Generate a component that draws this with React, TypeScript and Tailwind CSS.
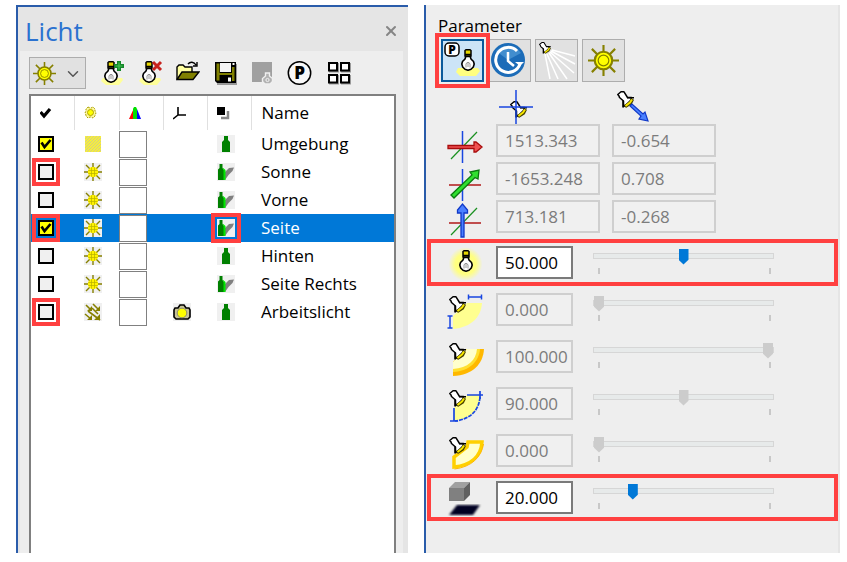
import React, { useState } from "react";
import { X, ChevronDown } from "lucide-react";

/* ---------- shared icon parts ---------- */

const Bulb = () => (
  <g>
    <path
      d="M4.800 7.500L4 10l-2.500 2.500L.8 15l.9 3 2.300 2.300 3 .9 3-.9 2.300-2.300.9-3-.7-2.500L10 10l-.8-2.500z"
      fill="#fff"
      stroke="#000"
      strokeWidth="1.600"
      strokeLinejoin="round"
    />
    <path d="M4 1.500L5 .7h4l1 .8V7H4z" fill="#e8d800" stroke="#000" strokeWidth="1.500" />
    <path d="M4 5.500h6" stroke="#000" strokeWidth="1.500" />
    <path d="M5 18.500V15l1-1.500h2L9 15v3.500M7 14v4" fill="none" stroke="#8a8a8a" strokeWidth=".9" />
  </g>
);

const Lamp = () => (
  <g strokeLinejoin="round">
    <path
      d="M.8 3.500L4 .8h3l3.500 5.700h4L14 9l-5 5-2.500 1.500v-5.500L2.500 6.500 2 5z"
      fill="#fff"
      stroke="#000"
      strokeWidth="1.500"
    />
    <path d="M10 6.800h7M6 9.500v7" stroke="#000" strokeWidth="1.500" />
    <path d="M15.500 8l-2 4-5.500 3.500" fill="none" stroke="#4a4400" strokeWidth="3.400" />
    <path d="M15 8.500l-2 3-4.500 3.500" fill="none" stroke="#f8e800" strokeWidth="2" />
  </g>
);

const Sun = () => (
  <svg viewBox="0 0 32 32" className="size-full">
    <g stroke="#868000" strokeWidth="2.200">
      <path d="M16 0v7M16 25v7M0 16h7M25 16h7M4 4l6.500 6.500M21.500 21.500L28 28M28 4l-6.500 6.500M10.500 21.500L4 28" />
      <circle cx="16" cy="16" r="9" fill="#ffff00" />
      <circle cx="16" cy="16" r="5.500" fill="#ffff00" strokeWidth="1.200" />
    </g>
  </svg>
);

const BulbAction = ({ remove }: { remove?: boolean }) => (
  <svg viewBox="0 0 24 24" className="size-6 overflow-visible">
    <path d="M3 17h19l1 2-4 5H6l-5-4z" fill="#ffff99" />
    <g transform="translate(4 0)">
      <Bulb />
    </g>
    {remove ? (
      <path d="M15 1l8 8M23 1l-8 8" stroke="#c8231e" strokeWidth="3" />
    ) : (
      <path d="M19 0v10M14 5h10" stroke="#16882a" strokeWidth="4" />
    )}
    {!remove && <path d="M19 1.500v7M15.500 5h7" stroke="#46c455" strokeWidth="1.200" />}
  </svg>
);

const OpenIcon = () => (
  <svg viewBox="0 0 24 24" className="size-6" stroke="#000" strokeWidth="1.400">
    <path d="M1 18V6l2-2h4l2 2h7v5" fill="#ffffa0" />
    <path d="M1 18.500L6 11h17l-6 7.500z" fill="#808000" />
    <path d="M12 3c2-2.500 6-2.500 8 1M21 1v4h-4" fill="none" />
  </svg>
);

const SaveIcon = () => (
  <svg viewBox="0 0 24 24" className="size-6">
    <path d="M3 3h20v21H3z" fill="#999" />
    <path d="M1 1h21v21H3l-2-2z" fill="#000" />
    <path d="M2.500 2.500h3v17h-3zM18 6h2.500v14H18zM4 12h15v2H4z" fill="#808000" />
    <path d="M6 2h11v9H6z" fill="#f4f4f4" />
    <path d="M18.500 2h2v2h-2zM14 16.500h3v4h-3z" fill="#fff" />
  </svg>
);

const StoredLightIcon = () => (
  <svg viewBox="0 0 24 24" className="size-6 overflow-visible">
    <path d="M0 1h20v20H0z" fill="#a0a0a0" />
    <path
      d="M13.500 12h4v3l3 2.500v3l-2.500 2.500h-5l-2.500-2.500v-3l3-2.500z"
      fill="#b2b2b2"
      stroke="#f0f0f0"
      strokeWidth="1.400"
    />
    <circle cx="15.500" cy="19" r="1.600" fill="none" stroke="#f4f4f4" />
  </svg>
);

const ParamIcon = () => (
  <svg viewBox="0 0 24 24" className="size-6 overflow-visible">
    <circle cx="9.500" cy="12" r="11.200" fill="#f8f8f8" stroke="#000" strokeWidth="1.500" />
    <text x="9.500" y="18" textAnchor="middle" fontSize="17" fontWeight="800" fontFamily="Open Sans">
      P
    </text>
  </svg>
);

const GridIcon = () => (
  <svg viewBox="0 0 24 24" className="size-6">
    {[[1, 2], [13, 2], [1, 14], [13, 14]].map(([x, y]) => (
      <g key={`${x}-${y}`} fill="none">
        <rect x={x + 1} y={y + 1} width="8" height="7.500" stroke="#999" strokeWidth="2" />
        <rect x={x} y={y} width="8" height="7.500" fill="#fff" stroke="#000" strokeWidth="2" />
      </g>
    ))}
  </svg>
);

/* ---------- table icons ---------- */

const CheckGlyph = () => (
  <svg viewBox="0 0 16 16" className="pointer-events-none absolute inset-0 size-4">
    <path d="M3.500 6.500l3 4.500 6-7" fill="none" stroke="#000" strokeWidth="2.600" />
  </svg>
);

const SunCell = () => (
  <svg viewBox="0 0 18 18" className="block size-[18px]">
    <path d="M0 0h18v18H0z" fill="#f0f0f0" />
    <path d="M9 0v4M9 14v4M0 9h4M14 9h4M2 2l4 4M12 12l4 4M16 2l-4 4M6 12l-4 4" stroke="#868000" strokeWidth="1.400" />
    <path d="M7 4h4l3 3v4l-3 3H7l-3-3V7z" fill="#fff200" />
    <path d="M7.500 4.500v9M10.500 4.500v9M4.500 7.500h9M4.500 10.500h9" stroke="#b8b000" strokeWidth=".7" />
  </svg>
);

const AmbientCell = () => (
  <svg viewBox="0 0 18 18" className="block size-[18px]">
    <path d="M1 1h16v16H1z" fill="#f6ee3c" />
    <path
      d="M1 4l3-3M1 7l6-6M1 10l9-9M1 13l12-12M1 16L16 1M3 17L17 3M6 17L17 6M9 17l8-8M12 17l5-5M15 17l2-2"
      stroke="#cfc98a"
      strokeWidth=".9"
    />
  </svg>
);

const WorkCell = () => (
  <svg viewBox="0 0 18 18" className="block size-[18px]">
    <path d="M0 0h18v18H0z" fill="#f0f0f0" />
    <path d="M2 2l5 5M9 1l6 6M4 8l12 9M1 11l6 5M8 5l6 6" stroke="#868000" strokeWidth="1.600" />
    <path d="M8 3v5H3zM16 3v5h-5zM16 11v6h-6zM8 12v5H3z" fill="#868000" />
  </svg>
);

const CameraCell = () => (
  <svg viewBox="0 0 18 18" className="block size-[18px]">
    <path d="M0 0h18v18H0z" fill="#f0f0f0" />
    <path d="M2 5h3l2-3h4l2 3h3l1 2v7l-2 2H3l-2-2V7z" fill="#c9c49a" stroke="#000" strokeWidth="1.600" />
    <circle cx="9" cy="10" r="4.800" fill="#ffff00" stroke="#777" strokeWidth=".8" />
  </svg>
);

const BottleCell = ({ shadow }: { shadow?: boolean }) => (
  <svg viewBox="0 0 18 18" className="block size-[18px]">
    <path d="M0 0h18v18H0z" fill="#f0f0f0" />
    {shadow ? (
      <g>
        <path d="M8 9l4-4 5-.5-1.500 3.500-4 4-3.500 5z" fill="#808080" />
        <path d="M2.500 1h3v4L7 7v10H1V6.500l1.500-1.500z" fill="#008000" />
        <path d="M5.500 4.500L8.500 7v10H6.500V7z" fill="#00e800" />
      </g>
    ) : (
      <path d="M7 1h4v4l2 2v10H5V7l2-2z" fill="#008000" />
    )}
  </svg>
);

const headIcons = [
  <svg key="on" viewBox="0 0 14 14" className="block size-[14px]">
    <path d="M.5 6l3.500 4L10 3" fill="none" stroke="#000" strokeWidth="3.200" />
  </svg>,
  <svg key="type" viewBox="0 0 14 14" className="block size-[14px]">
    <path d="M4 1l2 1h1l2-1 2 2v2l1 2-1 2v1l-2 2-2-1H6l-2 1-2-2V9L1 7l1-2V3z" fill="#fff8a0" stroke="#a89f00" strokeDasharray="2 1" />
    <circle cx="6.500" cy="6.500" r="3" fill="#ff0" stroke="#b0a600" />
  </svg>,
  <svg key="color" viewBox="0 0 14 14" className="block size-[14px]">
    <path d="M0 13L5 2v11z" fill="#f00" />
    <path d="M4 13V3l1-2h2l1 2v10z" fill="#00e000" />
    <path d="M8 3l4 10H8z" fill="#00f" />
  </svg>,
  <svg key="axis" viewBox="0 0 14 14" className="block size-[14px]">
    <path d="M5 1v8h8M5 9l-5 4" fill="none" stroke="#000" strokeWidth="1.600" />
  </svg>,
  <svg key="shadow" viewBox="0 0 14 14" className="block size-[14px]">
    <path d="M4 12h7V5" fill="none" stroke="#888" strokeWidth="2.500" />
    <path d="M0 1h8v8H0z" fill="#000" />
  </svg>,
];

const headNames = ["Aktiv", "Typ", "Farbe", "Achse", "Schatten"];

const lights = [
  { name: "Umgebung", on: true, icon: <AmbientCell /> },
  { name: "Sonne", icon: <SunCell />, shadow: true, marked: true },
  { name: "Vorne", icon: <SunCell />, shadow: true },
  { name: "Seite", on: true, icon: <SunCell />, shadow: true, marked: true, selected: true },
  { name: "Hinten", icon: <SunCell /> },
  { name: "Seite Rechts", icon: <SunCell />, shadow: true },
  { name: "Arbeitslicht", icon: <WorkCell />, camera: true, marked: true },
];

const mark = "outline-4 outline-offset-2 outline-[#ff4040]";

const LightPanel = () => (
  <section className="flex flex-col border-l-2 border-t-2 border-[#2a5caa] bg-[#e5e5e5] pr-[5px] pl-[2px]">
    <header className="flex h-11 items-center justify-between pt-1 pr-1 pl-[5px]">
      <h1 className="text-[26px] leading-9 text-[#2b72d0]">Licht</h1>
      <button aria-label="Schließen" className="text-[#858585]">
        <X size={16} strokeWidth={3} />
      </button>
    </header>

    <div className="flex flex-1 flex-col bg-[#eee] px-[7px] pl-[9px]">
      {/* Toolbar */}
      <div className="flex h-[43px] items-center gap-[14px]">
        <div className="relative h-8 w-[57px]">
          <select
            aria-label="Lichttyp"
            className="h-full w-full appearance-none border border-[#adadad] bg-[#e1e1e1]"
          >
            <option value="sun" aria-label="Sonne" />
          </select>
          <span className="pointer-events-none absolute top-[5px] left-1 size-[23px]">
            <Sun />
          </span>
          <ChevronDown className="pointer-events-none absolute top-2 right-1 text-[#555]" size={18} strokeWidth={2} />
        </div>
        <button aria-label="Licht hinzufügen"><BulbAction /></button>
        <button aria-label="Licht löschen"><BulbAction remove /></button>
        <button aria-label="Öffnen"><OpenIcon /></button>
        <button aria-label="Speichern"><SaveIcon /></button>
        <button aria-label="Licht ablegen" disabled><StoredLightIcon /></button>
        <button aria-label="Parameter"><ParamIcon /></button>
        <button aria-label="Übersicht"><GridIcon /></button>
      </div>

      {/* Light list */}
      <div className="flex-1 border-2 border-b-0 border-[#808080] bg-white">
        <table className="w-full table-fixed border-collapse text-left text-[17px]">
          <colgroup>
            <col className="w-[43px]" />
            <col className="w-[45px]" />
            <col className="w-11" />
            <col className="w-11" />
            <col className="w-11" />
            <col />
          </colgroup>
          <thead>
            <tr className="h-[34px]">
              {headIcons.map((icon, i) => (
                <th key={headNames[i]} aria-label={headNames[i]} className="border-r border-[#e0e0e0] p-0 pl-[9px]">
                  {icon}
                </th>
              ))}
              <th className="p-0 pl-[10px] font-normal">Name</th>
            </tr>
          </thead>
          <tbody>
            {lights.map((l) => (
              <tr key={l.name} className={l.selected ? "h-7 bg-[#0078d7] text-white" : "h-7"}>
                <td className="p-0 pl-[7px]">
                  <div className={`relative size-4 ${l.marked ? mark : ""}`}>
                    <input
                      type="checkbox"
                      aria-label={l.name}
                      defaultChecked={l.on}
                      className="block size-4 appearance-none border-2 border-black bg-[#f0f0f0] checked:bg-[#ffff00]"
                    />
                    {l.on && <CheckGlyph />}
                  </div>
                </td>
                <td className="p-0 pl-[10px]">{l.icon}</td>
                <td className="p-0">
                  <div className="h-[27px] w-7 border border-[#808080] bg-white" />
                </td>
                <td className="p-0 pl-[10px]">{l.camera && <CameraCell />}</td>
                <td className="p-0 pl-[10px]">
                  <div className={`size-[18px] ${l.selected ? mark : ""}`}>
                    <BottleCell shadow={l.shadow} />
                  </div>
                </td>
                <td className="p-0 pl-[10px] leading-7 whitespace-nowrap">{l.name}</td>
              </tr>
            ))}
          </tbody>
        </table>
      </div>
    </div>
  </section>
);

/* ---------- parameter icons, all on a 38 x 39 grid ---------- */

const Axis = ({ dir }: { dir: string }) => (
  <svg viewBox="0 0 38 38" className="h-[38px] w-[38px] shrink-0 overflow-visible">
    {dir !== "z" && <path d="M15.500 7v32" stroke="#1846e0" strokeWidth="1.500" />}
    {dir !== "x" && <path d="M2 23h32" stroke="#b01818" strokeWidth="1.500" />}
    {dir !== "y" && <path d="M4 35L30 8" stroke="#1a9020" strokeWidth="1.200" />}
    {dir === "x" && (
      <path d="M1 21.500h26v-3.500h2l6 5-6 5h-2v-3.500H1z" fill="#f05050" stroke="#a80c0c" strokeWidth="1.300" />
    )}
    {dir === "y" && (
      <path d="M4 33L25 13l-2-3 9-2-1 9-3-1.500L7 36z" fill="#30e030" stroke="#0a7a10" strokeWidth="1.300" />
    )}
    {dir === "z" && (
      <path d="M14 37V13h-3.500v-3l5-6 5 6v3H17v24z" fill="#4a80ff" stroke="#1038c8" strokeWidth="1.300" />
    )}
  </svg>
);

const sliderIcons = [
  <g key="power">
    <circle cx="18.500" cy="21" r="17" fill="url(#glow)" />
    <g transform="translate(12 7)"><Bulb /></g>
  </g>,
  <g key="near">
    <path d="M20 13h15c-1 14-10 24-29 26V26z" fill="#ffff90" />
    <path d="M21 7h14M21.500 4.500v5M34.500 4.500v5M3 26v12M.5 26h5M.5 38h5" stroke="#1846e0" strokeWidth="1.500" />
    <g transform="translate(2 6)"><Lamp /></g>
  </g>,
  <g key="far">
    <path d="M20 12h17c-1 15-11 26-31 27V25z" fill="#ffb800" />
    <path d="M20 12h13c-1 12-10 22-27 23V25z" fill="#ffe030" />
    <path d="M20 12h10c-1 11-9 19-24 20v-7z" fill="#ffffcc" />
    <g transform="translate(2 6)"><Lamp /></g>
  </g>,
  <g key="angle">
    <path d="M20 11h14C33 26 23 35 7 37V24z" fill="#ffff90" />
    <path d="M20 11h16M33 7v8M7 24v13M3 37h8" fill="none" stroke="#1846e0" strokeWidth="1.700" />
    <path d="M33 13c-1 13-9 22-25 24" fill="none" stroke="#1846e0" strokeWidth="1.700" strokeDasharray="4 1" />
    <g transform="translate(2 6)"><Lamp /></g>
  </g>,
  <g key="soft">
    <path d="M21 11h14c-1 14-11 23-28 25V26L20 16z" fill="#ffffcc" stroke="#ffd000" strokeWidth="3.500" />
    <path d="M36.500 13c-2 13-12 23-29 25" fill="none" stroke="#ffb800" strokeWidth="1" />
    <g transform="translate(2 6)"><Lamp /></g>
  </g>,
  <g key="shadow">
    <path d="M10 27h23l-7 10H2z" fill="#000020" filter="url(#soft)" />
    <path d="M2 10l6-6h15l-6 6z" fill="#a0a0a0" />
    <path d="M2 10h15v13H2z" fill="#808080" />
    <path d="M17 10l6-6v13l-6 6z" fill="#606060" />
  </g>,
];

const sliders = [
  { label: "Intensität", text: "50.000", value: 50, active: true },
  { label: "Startabstand", text: "0.000", value: 0 },
  { label: "Endabstand", text: "100.000", value: 100 },
  { label: "Öffnungswinkel", text: "90.000", value: 50 },
  { label: "Weicher Rand", text: "0.000", value: 0 },
  { label: "Schatten", text: "20.000", value: 20, active: true },
];

const coords = [
  { dir: "x", pos: "1513.343", target: "-0.654" },
  { dir: "y", pos: "-1653.248", target: "0.708" },
  { dir: "z", pos: "713.181", target: "-0.268" },
];

const field = "h-[33px] border-2 pl-[7px] text-[17px] leading-6";
const fieldOff = "border-[#cfcfcf] bg-[#f0f0f0] text-[#7c7c7c]";

const SliderRow = ({ row, icon }: { row: (typeof sliders)[number]; icon: React.ReactNode }) => {
  const [value, setValue] = useState(row.value);

  return (
    <div
      className={`flex h-[47px] items-center border-4 pl-4 ${row.active ? "border-[#ff4040]" : "border-transparent"}`}
    >
      <svg viewBox="0 0 38 39" className="h-[39px] w-[38px] shrink-0">
        <defs>
          <radialGradient id="glow">
            <stop offset="0.6" stopColor="#ffff80" />
            <stop offset="1" stopColor="#ffff80" stopOpacity="0" />
          </radialGradient>
          <filter id="soft">
            <feGaussianBlur stdDeviation="1" />
          </filter>
        </defs>
        {icon}
      </svg>
      <input
        aria-label={row.label}
        defaultValue={row.text}
        disabled={!row.active}
        className={`${field} ml-[11px] w-[77px] shrink-0 ${row.active ? "border-[#7a7a7a] bg-white text-black" : fieldOff}`}
      />
      <div className="mr-[60px] ml-5 flex-1 pb-1">
        <input
          type="range"
          aria-label={row.label}
          value={value}
          disabled={!row.active}
          onChange={(e) => setValue(Number(e.target.value))}
          className="block h-4 w-full appearance-none bg-transparent [&::-webkit-slider-runnable-track]:h-[6px] [&::-webkit-slider-runnable-track]:border [&::-webkit-slider-runnable-track]:border-[#d6d6d6] [&::-webkit-slider-runnable-track]:bg-[#e7eaea] [&::-webkit-slider-thumb]:-mt-[5px] [&::-webkit-slider-thumb]:h-4 [&::-webkit-slider-thumb]:w-[10px] [&::-webkit-slider-thumb]:appearance-none [&::-webkit-slider-thumb]:bg-[#0078d7] [&::-webkit-slider-thumb]:[clip-path:polygon(0_0,100%_0,100%_70%,50%_100%,0_70%)] disabled:[&::-webkit-slider-thumb]:bg-[#cccccc]"
        />
        <div className="mt-1 flex justify-between pr-[3px] pl-[5px]">
          <span className="h-[6px] w-[2px] bg-[#c8c8c8]" />
          <span className="h-[6px] w-[2px] bg-[#c8c8c8]" />
        </div>
      </div>
    </div>
  );
};

const tab = "size-[43px] border border-[#adadad] bg-[#e1e1e1]";

const ParameterPanel = () => (
  <section className="border-l-2 border-[#2a5caa] bg-[#eee]">
    <div className="h-full border-r-2 border-[#e5e5e5] pt-2 pl-[1px]">
      <h2 className="pl-[11px] text-[17px] leading-[26px]">Parameter</h2>

      {/* Mode buttons */}
      <div className="flex gap-1 pl-[14px]">
        <button aria-label="Lichtparameter" className={`relative z-10 size-[43px] border-2 border-[#0a5a9c] bg-[#cce4f7] ${mark}`}>
          <svg viewBox="0 0 39 39" className="size-full">
            <path d="M15 27h20l2 3-4 5H17l-4-4z" fill="#ffff80" />
            <rect x="2" y="2" width="14" height="13" rx="4" fill="#fff" stroke="#000" strokeWidth="1.500" />
            <text x="9" y="13" textAnchor="middle" fontSize="12" fontWeight="800" fontFamily="Open Sans">P</text>
            <g transform="translate(18 8)"><Bulb /></g>
          </svg>
        </button>
        <button aria-label="Tageszeit" className={tab}>
          <svg viewBox="0 0 41 41" className="size-full">
            <circle cx="19" cy="20" r="17" fill="#1c6cb8" />
            <path d="M7 11a16 16 0 0 1 25 2L19 20z" fill="#5aa4dc" opacity=".6" />
            <path d="M28 11A12.500 12.500 0 1 0 31 24" fill="none" stroke="#fff" strokeWidth="3" />
            <path d="M26 22h9l-4 4z" fill="#fff" />
            <path d="M19 12v9l6 5" fill="none" stroke="#fff" strokeWidth="2.500" />
          </svg>
        </button>
        <button aria-label="Spot" className={tab}>
          <svg viewBox="0 0 41 41" className="size-full">
            <path d="M16 10l23 6M15 11l24 13M14 12l24 21M13 13l18 26M11 14l11 25M9 14l5 25" stroke="#fff" strokeWidth="1.500" />
            <g transform="translate(3 2) scale(.7)"><Lamp /></g>
          </svg>
        </button>
        <button aria-label="Sonne" className={`${tab} p-[5px]`}>
          <Sun />
        </button>
      </div>

      {/* Position and direction */}
      <div className="flex h-[42px] items-end pl-[72px]">
        <svg viewBox="0 0 34 34" className="size-[34px]">
          <g transform="translate(11 11)"><Lamp /></g>
          <path d="M17 0v34M0 17h34" stroke="#1846e0" strokeWidth="1.500" />
        </svg>
        <svg viewBox="0 0 34 34" className="ml-[84px] size-[34px]">
          <g transform="translate(0 1)"><Lamp /></g>
          <path d="M13 16l2-2 11 10 2-2 3 9-9-2 2-3z" fill="#4a80ff" stroke="#1038c8" strokeWidth="1.200" />
        </svg>
      </div>
      <div className="mb-[1px] pl-5">
        {coords.map((c) => (
          <div key={c.dir} className="flex h-[38px]">
            <Axis dir={c.dir} />
            <input aria-label={`Position ${c.dir}`} defaultValue={c.pos} disabled className={`${field} ${fieldOff} ml-[11px] w-[104px]`} />
            <input aria-label={`Richtung ${c.dir}`} defaultValue={c.target} disabled className={`${field} ${fieldOff} ml-3 w-[104px]`} />
          </div>
        ))}
      </div>

      {sliders.map((row, i) => (
        <SliderRow key={row.label} row={row} icon={sliderIcons[i]} />
      ))}
    </div>
  </section>
);

const App = () => {
  return (
    <main
      className="grid min-h-screen grid-cols-[392fr_416fr] gap-4 bg-white pt-[5px] pr-[7px] pb-[9px] pl-4 text-black"
      style={{ fontFamily: '"Open Sans", sans-serif' }}
    >
      <LightPanel />
      <ParameterPanel />
    </main>
  );
};

export default App;
